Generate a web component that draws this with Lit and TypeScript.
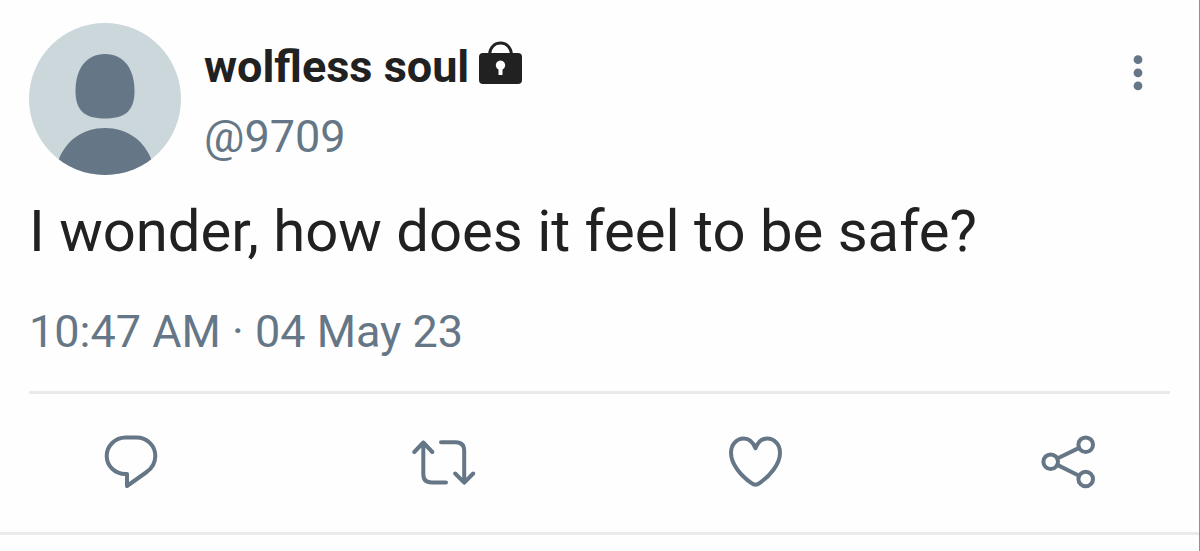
import { LitElement, html, css, svg } from "lit";
import { customElement } from "lit/decorators.js";

const actions = [
  {
    label: "Reply",
    icon: svg`<path d="M28 44H26.500C16 44 7.700 36 7.700 26S16 7.500 26.500 7.500H37.500C48 7.500 56.300 15.500 56.300 26C56.300 33.500 53 38.500 47 42.500L28 56Z"/>`,
  },
  {
    label: "Retweet",
    icon: svg`<path d="M2.300 22L11.300 12.500L20.300 22M11.300 12.500V44Q11.300 52.500 19.800 52.500H34M29 12.200H43.700Q52.200 12.200 52.200 20.700V52.500M43.200 43.500L52.200 52.700L61.200 43.500"/>`,
  },
  {
    label: "Like",
    icon: svg`<path d="M31.500 18.300C29 12 24.500 8.500 19.800 8.500C12.500 8.500 7 14.700 7 22.700C7 34.200 17 45.700 27.500 53.200Q31.500 56.200 35.500 53.200C46 45.700 56 34.200 56 22.700C56 14.700 50.500 8.500 43.200 8.500C38.500 8.500 34 12 31.500 18.300Z"/>`,
  },
  {
    label: "Share",
    icon: svg`<circle cx="13.700" cy="31.700" r="7.300"/><circle cx="48.700" cy="14.700" r="7.300"/><circle cx="48.700" cy="49" r="7.300"/><path d="M20.300 28.500L42.100 17.900M20.300 34.900L42.100 45.800"/>`,
  },
];

@customElement("app-root")
export class AppRoot extends LitElement {
  static styles = css`
    :host {
      display: block;
      min-height: 100vh;
      box-sizing: border-box;
      border-right: 1px solid #909090;
      background: #fefefe;
      color: #212121;
      font-family: Roboto, "Liberation Sans", sans-serif;
    }
    .post {
      padding: 23px 29px 0;
      border-bottom: 3px solid #eaeaea;
    }
    .head {
      display: flex;
      align-items: flex-start;
      gap: 23px;
    }
    .avatar {
      flex: none;
      width: 152px;
      height: 152px;
      display: block;
    }
    .who {
      flex: 1;
      min-width: 0;
      padding-top: 9px;
    }
    .name,
    .handle,
    .date {
      margin: 0;
      font-size: 45px;
      line-height: 70px;
    }
    .name {
      display: flex;
      gap: 10px;
      font-weight: 700;
    }
    .lock {
      width: 44px;
      height: 44px;
      margin-top: 9px;
    }
    .handle,
    .date {
      color: #657786;
    }
    .handle {
      display: block;
      text-decoration: none;
    }
    button {
      display: block;
      padding: 0;
      border: 0;
      background: none;
      color: #657786;
      cursor: pointer;
    }
    .more {
      width: 64px;
      height: 64px;
      margin-top: 18px;
    }
    button svg {
      display: block;
      width: 64px;
      height: 64px;
    }
    .text {
      margin: 21px 0 31px;
      font-size: 58px;
      line-height: 70px;
    }
    .actions {
      display: flex;
      justify-content: space-between;
      margin-top: 24px;
      padding: 36px 69px 38px 70px;
      border-top: 3px solid #eaeaea;
    }
    .stroke {
      fill: none;
      stroke: currentColor;
      stroke-width: 4;
      stroke-linecap: round;
      stroke-linejoin: round;
    }
  `;

  render() {
    return html`
      <article class="post">
        <header class="head">
          <svg class="avatar" viewBox="0 0 152 152" role="img" aria-label="Profile picture">
            <defs><clipPath id="disc"><circle cx="76" cy="76" r="76" /></clipPath></defs>
            <circle cx="76" cy="76" r="76" fill="#ccd7db" />
            <g clip-path="url(#disc)" fill="#657786">
              <path d="M76 31C95 31 105.500 46 105.500 68C105.500 87 97 95.500 76 95.500S46.500 87 46.500 68C46.500 46 57 31 76 31Z" />
              <path d="M76 105C98 105 115 117 123 138V152H29V138C37 117 54 105 76 105Z" />
            </g>
          </svg>
          <div class="who">
            <h1 class="name">
              <span>wolfless soul</span>
              <svg class="lock" viewBox="0 0 44 44" role="img" aria-label="Protected account">
                <path d="M10.500 13C11.500 6 16 2 21.500 2S31.500 6 32.500 13" fill="none" stroke="#212121" stroke-width="3" />
                <rect y="12" width="43" height="31" rx="4" fill="#212121" />
                <path d="M19.500 34V28.500A4.700 4.700 0 1 1 23.500 28.500V34Z" fill="#fefefe" />
              </svg>
            </h1>
            <a class="handle" href="#">@9709</a>
          </div>
          <button class="more" aria-label="More options">
            <svg viewBox="0 0 64 64" fill="currentColor">
              <circle cx="32" cy="18.700" r="4.400" />
              <circle cx="32" cy="31.800" r="4.400" />
              <circle cx="32" cy="44.900" r="4.400" />
            </svg>
          </button>
        </header>
        <p class="text">I wonder, how does it feel to be safe?</p>
        <p class="date">10:47 AM · 04 May 23</p>
        <footer class="actions">
          ${actions.map(
            (a) => html`<button aria-label=${a.label}>
              <svg class="stroke" viewBox="0 0 64 64">${a.icon}</svg>
            </button>`
          )}
        </footer>
      </article>
    `;
  }
}
